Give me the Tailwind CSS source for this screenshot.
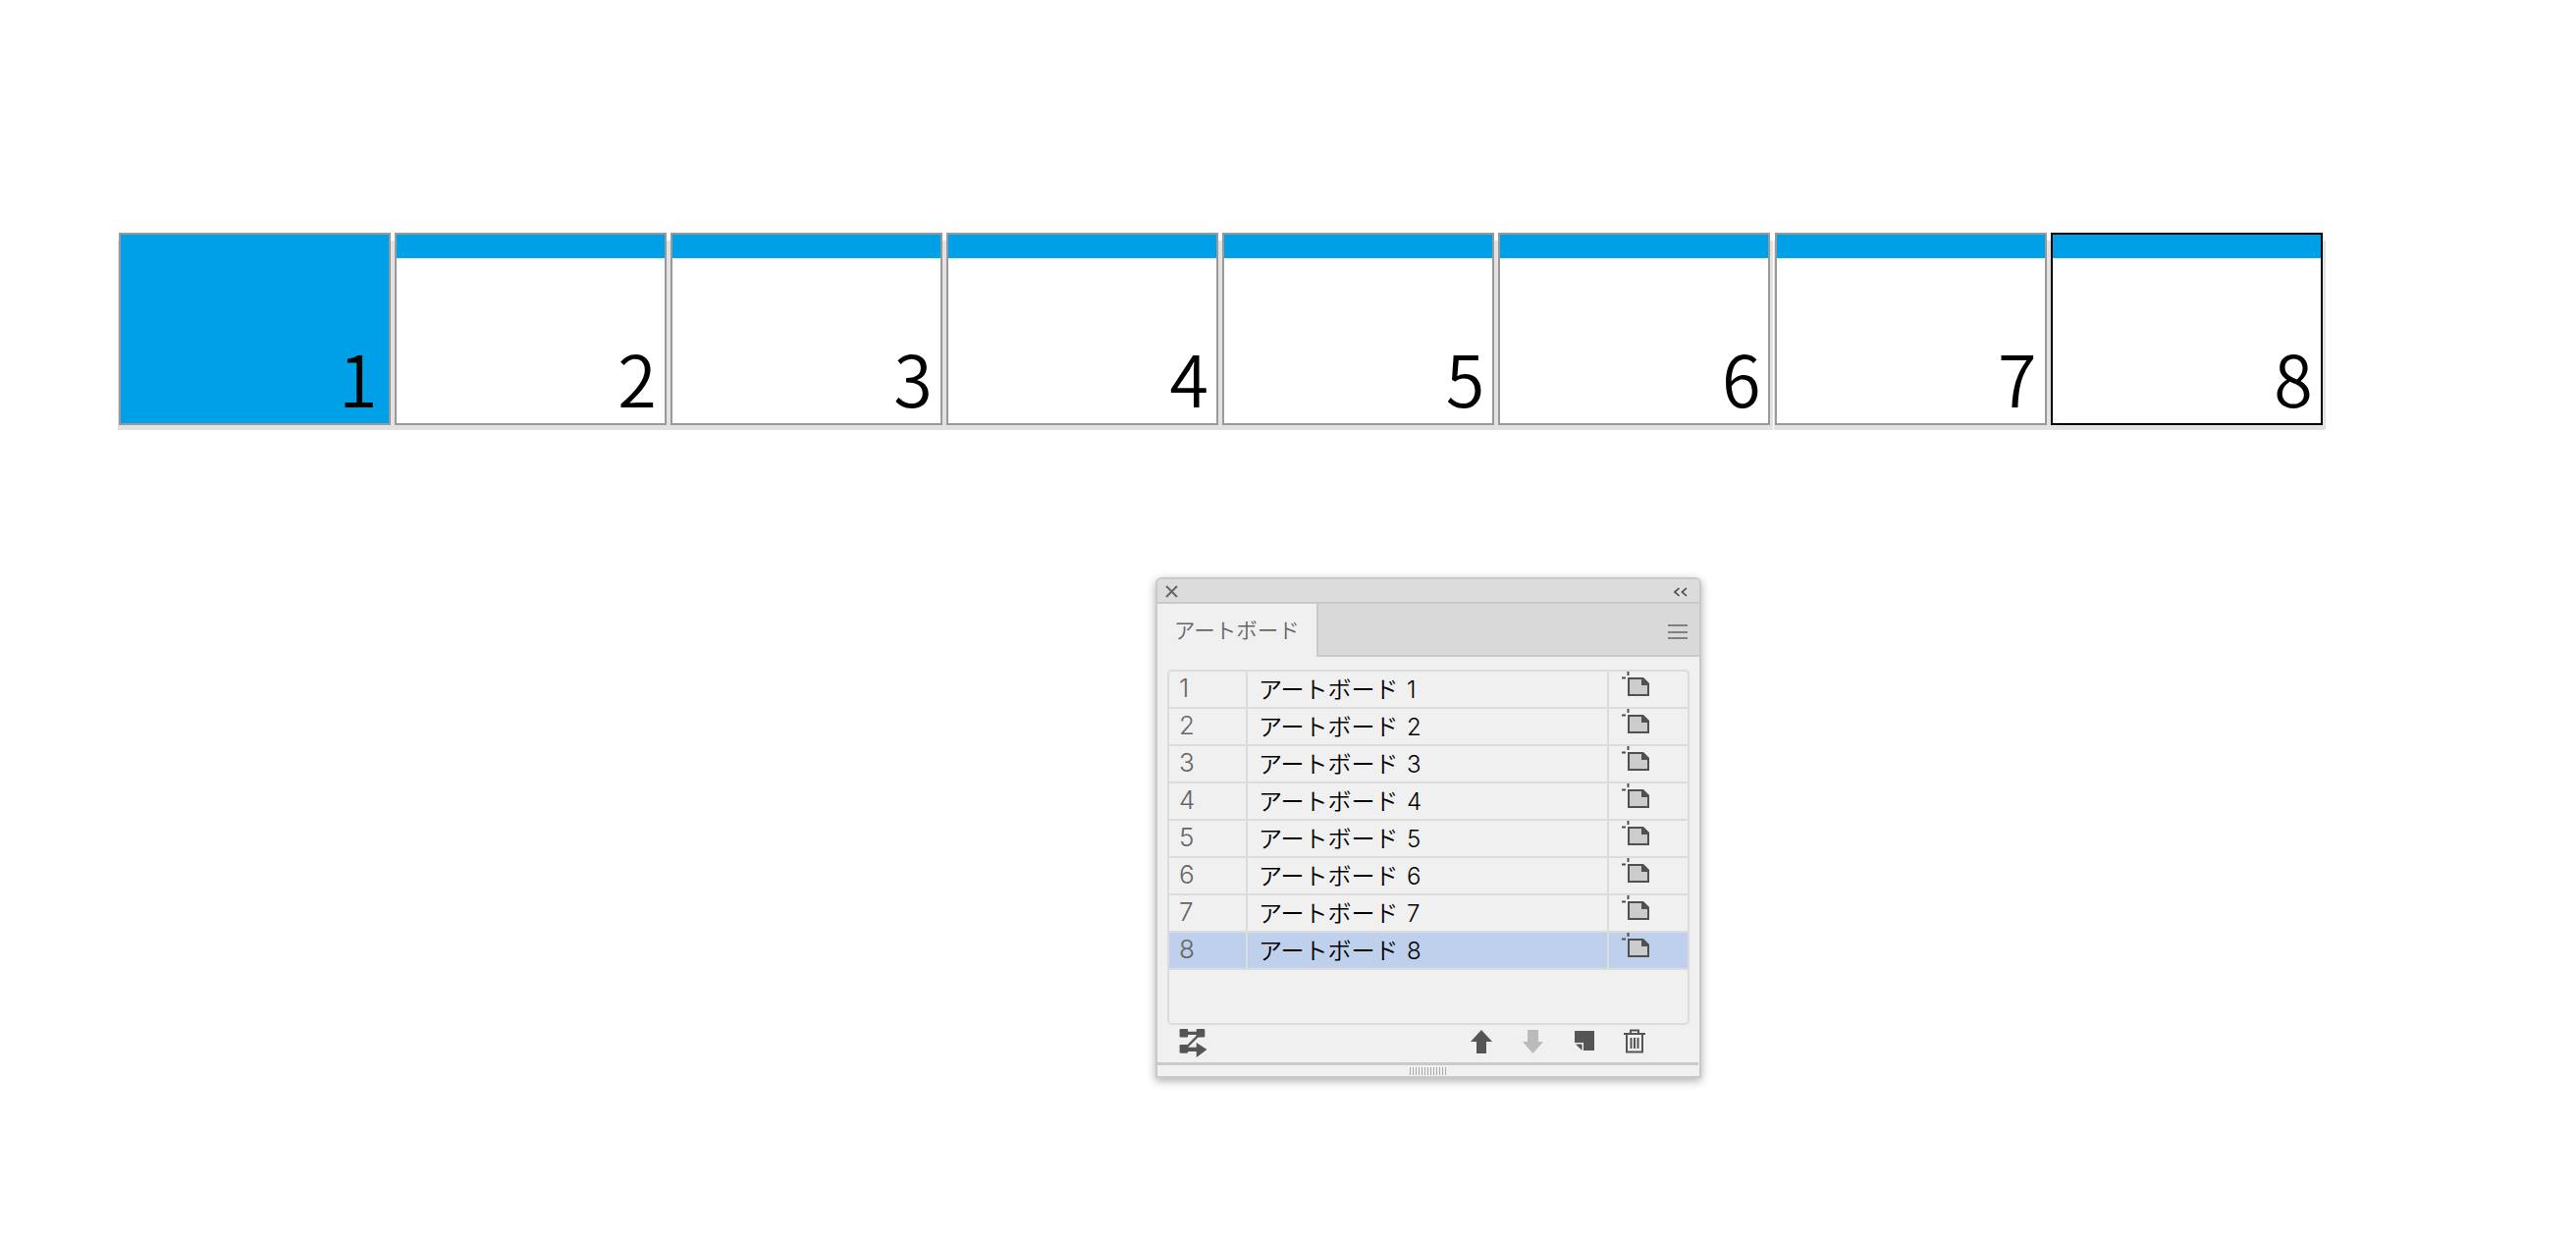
<!DOCTYPE html>
<html lang="ja">
<head>
    <meta charset="UTF-8">
    <title>アートボード</title>
    <script src="https://cdn.jsdelivr.net/npm/@tailwindcss/browser@4"></script>
</head>
<body class="bg-white h-[1262px] overflow-hidden font-['Noto_Sans_CJK_JP','Noto_Sans',sans-serif]">
    <svg class="hidden">
        <symbol id="ab" viewBox="0 0 30 26">
            <path d="M7 7H21L27 13V24H7Z" fill="#ccc" stroke="#505050" stroke-width="2"/>
            <path d="M20 6H22L28 12V14H20Z" fill="#505050"/>
            <path d="M0 6.5H4M6.5 0V4" stroke="#505050" stroke-width="2"/>
        </symbol>
    </svg>

    <!-- artboards -->
    <div class="flex gap-[4.2px] pl-[120.5px] pt-[237px]">
        <div class="relative w-[277px] h-[196px]"><div class="absolute -left-px -right-[3px] top-2 -bottom-[5px] bg-[#e2e2e2]"></div><div class="relative h-full border-2 border-[#999] bg-[#00a0e9] flex items-end justify-end pr-[11px] pb-[11px] text-[72px] leading-[72px] font-[350] text-black">1</div></div>
        <div class="relative w-[277px] h-[196px]"><div class="absolute -left-px -right-[3px] top-2 -bottom-[5px] bg-[#e2e2e2]"></div><div class="relative h-full border-2 border-[#999] bg-white flex flex-col"><div class="h-[24px] bg-[#00a0e9] border-b border-[#00aeef]"></div><div class="flex-1 flex items-end justify-end pr-[8px] pb-[11px] text-[72px] leading-[72px] font-[350] text-black">2</div></div></div>
        <div class="relative w-[277px] h-[196px]"><div class="absolute -left-px -right-[3px] top-2 -bottom-[5px] bg-[#e2e2e2]"></div><div class="relative h-full border-2 border-[#999] bg-white flex flex-col"><div class="h-[24px] bg-[#00a0e9] border-b border-[#00aeef]"></div><div class="flex-1 flex items-end justify-end pr-[8px] pb-[11px] text-[72px] leading-[72px] font-[350] text-black">3</div></div></div>
        <div class="relative w-[277px] h-[196px]"><div class="absolute -left-px -right-[3px] top-2 -bottom-[5px] bg-[#e2e2e2]"></div><div class="relative h-full border-2 border-[#999] bg-white flex flex-col"><div class="h-[24px] bg-[#00a0e9] border-b border-[#00aeef]"></div><div class="flex-1 flex items-end justify-end pr-[8px] pb-[11px] text-[72px] leading-[72px] font-[350] text-black">4</div></div></div>
        <div class="relative w-[277px] h-[196px]"><div class="absolute -left-px -right-[3px] top-2 -bottom-[5px] bg-[#e2e2e2]"></div><div class="relative h-full border-2 border-[#999] bg-white flex flex-col"><div class="h-[24px] bg-[#00a0e9] border-b border-[#00aeef]"></div><div class="flex-1 flex items-end justify-end pr-[8px] pb-[11px] text-[72px] leading-[72px] font-[350] text-black">5</div></div></div>
        <div class="relative w-[277px] h-[196px]"><div class="absolute -left-px -right-[3px] top-2 -bottom-[5px] bg-[#e2e2e2]"></div><div class="relative h-full border-2 border-[#999] bg-white flex flex-col"><div class="h-[24px] bg-[#00a0e9] border-b border-[#00aeef]"></div><div class="flex-1 flex items-end justify-end pr-[8px] pb-[11px] text-[72px] leading-[72px] font-[350] text-black">6</div></div></div>
        <div class="relative w-[277px] h-[196px]"><div class="absolute -left-px -right-[3px] top-2 -bottom-[5px] bg-[#e2e2e2]"></div><div class="relative h-full border-2 border-[#999] bg-white flex flex-col"><div class="h-[24px] bg-[#00a0e9] border-b border-[#00aeef]"></div><div class="flex-1 flex items-end justify-end pr-[8px] pb-[11px] text-[72px] leading-[72px] font-[350] text-black">7</div></div></div>
        <div class="relative w-[277px] h-[196px]"><div class="absolute -left-px -right-[3px] top-2 -bottom-[5px] bg-[#e2e2e2]"></div><div class="relative h-full border-2 border-black bg-white flex flex-col"><div class="h-[24px] bg-[#00a0e9] border-b border-[#00aeef]"></div><div class="flex-1 flex items-end justify-end pr-[8px] pb-[11px] text-[72px] leading-[72px] font-[350] text-black">8</div></div></div>
    </div>

    <!-- panel -->
    <div class="ml-[1177px] mt-[155px] w-[556px] h-[510px] border-2 border-[#c9c9c9] rounded-t-[6px] bg-[#f0f0f0] shadow-[0_3px_10px_rgba(0,0,0,0.32)] flex flex-col">
        <div class="h-[25px] bg-[#dcdcdc] border-b-2 border-[#c9c9c9] flex items-center justify-between pl-[8px] pr-[12px] pt-[2px] rounded-t-[4px] shrink-0">
            <svg width="13" height="13" viewBox="0 0 13 13"><path d="M1 1L12 12M12 1L1 12" stroke="#666" stroke-width="2"/></svg>
            <svg width="14" height="10" viewBox="0 0 14 10"><path d="M5.5 1L1 5L5.5 9M13 1L8.5 5L13 9" fill="none" stroke="#444" stroke-width="1.6"/></svg>
        </div>
        <div class="h-[54px] bg-[#d9d9d9] border-b-2 border-[#c9c9c9] flex justify-between shrink-0">
            <div class="w-[164px] h-[54px] bg-[#f0f0f0] border-r-2 border-[#c9c9c9] text-[21.5px] text-[#666] font-[350] flex items-center pl-[17px] pb-[1px]">アートボード</div>
            <div class="flex flex-col gap-[4.5px] pt-[21px] pr-[12px]">
                <div class="w-[20px] h-[2px] bg-[#808080]"></div>
                <div class="w-[20px] h-[2px] bg-[#808080]"></div>
                <div class="w-[20px] h-[2px] bg-[#808080]"></div>
            </div>
        </div>
        <div class="mt-[13px] mx-[10px] h-[362px] border-2 border-[#dcdcdc] rounded-[5px] text-[24px] leading-[34px] text-black shrink-0">
            <div class="flex h-[38px] border-b-2 border-[#dcdcdc]"><div class="w-[80px] border-r-2 border-[#dcdcdc] pl-[10px] text-[26px] font-light font-['Inter'] text-[#666]">1</div><div class="w-[368px] border-r-2 border-[#dcdcdc] pl-[11px] font-[350]">アートボード <span class="ml-[3px] font-['Inter'] font-light">1</span></div><div class="pl-[13px]"><svg width="30" height="26"><use href="#ab"/></svg></div></div>
            <div class="flex h-[38px] border-b-2 border-[#dcdcdc]"><div class="w-[80px] border-r-2 border-[#dcdcdc] pl-[10px] text-[26px] font-light font-['Inter'] text-[#666]">2</div><div class="w-[368px] border-r-2 border-[#dcdcdc] pl-[11px] font-[350]">アートボード <span class="ml-[3px] font-['Inter'] font-light">2</span></div><div class="pl-[13px]"><svg width="30" height="26"><use href="#ab"/></svg></div></div>
            <div class="flex h-[38px] border-b-2 border-[#dcdcdc]"><div class="w-[80px] border-r-2 border-[#dcdcdc] pl-[10px] text-[26px] font-light font-['Inter'] text-[#666]">3</div><div class="w-[368px] border-r-2 border-[#dcdcdc] pl-[11px] font-[350]">アートボード <span class="ml-[3px] font-['Inter'] font-light">3</span></div><div class="pl-[13px]"><svg width="30" height="26"><use href="#ab"/></svg></div></div>
            <div class="flex h-[38px] border-b-2 border-[#dcdcdc]"><div class="w-[80px] border-r-2 border-[#dcdcdc] pl-[10px] text-[26px] font-light font-['Inter'] text-[#666]">4</div><div class="w-[368px] border-r-2 border-[#dcdcdc] pl-[11px] font-[350]">アートボード <span class="ml-[3px] font-['Inter'] font-light">4</span></div><div class="pl-[13px]"><svg width="30" height="26"><use href="#ab"/></svg></div></div>
            <div class="flex h-[38px] border-b-2 border-[#dcdcdc]"><div class="w-[80px] border-r-2 border-[#dcdcdc] pl-[10px] text-[26px] font-light font-['Inter'] text-[#666]">5</div><div class="w-[368px] border-r-2 border-[#dcdcdc] pl-[11px] font-[350]">アートボード <span class="ml-[3px] font-['Inter'] font-light">5</span></div><div class="pl-[13px]"><svg width="30" height="26"><use href="#ab"/></svg></div></div>
            <div class="flex h-[38px] border-b-2 border-[#dcdcdc]"><div class="w-[80px] border-r-2 border-[#dcdcdc] pl-[10px] text-[26px] font-light font-['Inter'] text-[#666]">6</div><div class="w-[368px] border-r-2 border-[#dcdcdc] pl-[11px] font-[350]">アートボード <span class="ml-[3px] font-['Inter'] font-light">6</span></div><div class="pl-[13px]"><svg width="30" height="26"><use href="#ab"/></svg></div></div>
            <div class="flex h-[38px] border-b-2 border-[#dcdcdc]"><div class="w-[80px] border-r-2 border-[#dcdcdc] pl-[10px] text-[26px] font-light font-['Inter'] text-[#666]">7</div><div class="w-[368px] border-r-2 border-[#dcdcdc] pl-[11px] font-[350]">アートボード <span class="ml-[3px] font-['Inter'] font-light">7</span></div><div class="pl-[13px]"><svg width="30" height="26"><use href="#ab"/></svg></div></div>
            <div class="flex h-[38px] border-b-2 border-[#dcdcdc] bg-[#bfd0ed]"><div class="w-[80px] border-r-2 border-[#dcdcdc] pl-[10px] text-[26px] font-light font-['Inter'] text-[#666]">8</div><div class="w-[368px] border-r-2 border-[#dcdcdc] pl-[11px] font-[350]">アートボード <span class="ml-[3px] font-['Inter'] font-light">8</span></div><div class="pl-[13px]"><svg width="30" height="26"><use href="#ab"/></svg></div></div>
        </div>
        <!-- footer icons -->
        <div class="h-[38px] flex items-start pt-[4px] pl-[22px] shrink-0">
            <svg width="29" height="30" viewBox="0 0 26 28" fill="#555"><rect x="0" y="0" width="8" height="8" rx="1"/><rect x="16" y="0" width="8" height="8" rx="1"/><rect x="0" y="15" width="8" height="8" rx="1"/><path d="M7 2.5H17V5.5H7ZM7 17.5H16V13L26 19.5L16 27V21.5H7Z"/><path d="M18 6L7 17" stroke="#555" stroke-width="2.2"/></svg>
            <svg class="ml-[268px] mt-px" width="22" height="24" viewBox="0 0 22 24" fill="#555"><path d="M11 0L22 12H16V24H6V12H0Z"/></svg>
            <svg class="ml-[31px] mt-px" width="21" height="24" viewBox="0 0 21 24" fill="#bbb"><path d="M5 0H16V12H21L10.5 24L0 12H5Z"/></svg>
            <svg class="ml-[32px] mt-[2px]" width="21" height="21" viewBox="0 0 21 21" fill="#555"><path d="M0 0H20V20H9V12H0Z"/><path d="M1 13.5H7.5V20Z"/></svg>
            <svg class="ml-[29px]" width="22" height="25" viewBox="0 0 22 25" fill="none" stroke="#555" stroke-width="2"><path d="M0 5H22M7 5V1.5H15V5M3 5V23.5H19V5"/><path d="M7.5 9V20M11 9V20M14.5 9V20"/></svg>
        </div>
        <div class="h-[3px] bg-[#c9c9c9] mr-px shrink-0"></div>
        <div class="flex-1 flex justify-center pt-[2px]">
            <div class="w-[38px] h-[8px] bg-[repeating-linear-gradient(90deg,#aaa_0,#aaa_1px,transparent_1px,transparent_3px)]"></div>
        </div>
    </div>
</body>
</html>
